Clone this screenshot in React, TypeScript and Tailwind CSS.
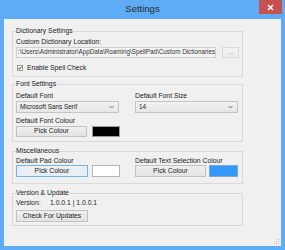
import React from 'react';

const font = "font-['Liberation_Sans',Arial,sans-serif]";

const GroupBox = ({ title, className, children }: { title: string; className: string; children: React.ReactNode }) => (
  <fieldset className={`ml-[8px] w-[231px] border border-[#d9d9d9] px-[3px] ${className}`}>
    <legend className="px-0 text-[6.8px] leading-[10px] text-[#222]">{title}</legend>
    {children}
  </fieldset>
);

const Label = ({ children, className = '' }: { children: React.ReactNode; className?: string }) => (
  <div className={`h-[10px] text-[6.8px] leading-[10px] text-[#222] whitespace-nowrap ${className}`}>{children}</div>
);

const Btn = ({ children, className = '' }: { children: React.ReactNode; className?: string }) => (
  <div
    className={`flex items-center justify-center border bg-gradient-to-b from-[#efefef] to-[#e3e3e3] text-[6.8px] leading-none text-[#222] ${className}`}
  >
    {children}
  </div>
);

const Combo = ({ value }: { value: string }) => (
  <div className="flex h-[12px] items-center justify-between border border-[#c4c4c4] bg-gradient-to-b from-[#f2f2f2] to-[#e6e6e6] pl-[3px] pr-[4px]">
    <span className="text-[6.4px] leading-none text-[#222]">{value}</span>
    <svg width="5" height="4" viewBox="0 0 5 4">
      <path d="M0.5 1 L2.5 3 L4.5 1" fill="none" stroke="#555" strokeWidth="0.8" />
    </svg>
  </div>
);

export default function App() {
  return (
    <div className={`relative flex h-[250px] w-[285px] flex-col bg-[#5eacf6] px-[4px] pb-[4px] ${font}`}>
      {/* title bar */}
      <div className="flex h-[19px] items-center justify-center pb-[1px] text-[9.5px] text-[#2a2a2a]">Settings</div>
      <div className="absolute left-[259px] top-0 flex h-[14px] w-[23px] items-center justify-center bg-[#c75050]">
        <svg width="7" height="7" viewBox="0 0 7 7">
          <path d="M1 1 L6 6 M6 1 L1 6" stroke="#fff" strokeWidth="1.5" />
        </svg>
      </div>

      <div className="relative flex-1 bg-[#f0f0f0]">
        <GroupBox title="Dictionary Settings" className="mt-[7px] pb-[3px]">
          <Label className="mt-[1px]">Custom Dictionary Location:</Label>
          <div className="flex h-[11px] gap-[6px]">
            <div className="flex w-[200px] items-center overflow-hidden border border-[#cfcfcf] bg-[#f3f3f3] pl-[1px] text-[6.3px] leading-none whitespace-nowrap text-[#333]">
              :\Users\Administrator\AppData\Roaming\SpellPad\Custom Dictionaries
            </div>
            <Btn className="w-[17px] border-[#dadada] text-[#999] from-[#f2f2f2] to-[#ededed]">...</Btn>
          </div>
          <div className="mt-[5px] flex h-[10px] items-center gap-[4px] pl-[1px]">
            <svg width="6" height="6" viewBox="0 0 6 6">
              <rect x="0.5" y="0.5" width="5" height="5" fill="#fff" stroke="#777" strokeWidth="0.7" />
              <path d="M1.4 3 L2.5 4.2 L4.6 1.6" fill="none" stroke="#222" strokeWidth="0.9" />
            </svg>
            <span className="text-[6.8px] leading-none text-[#222]">Enable Spell Check</span>
          </div>
        </GroupBox>

        <GroupBox title="Font Settings" className="mt-[2px] pb-[4px]">
          <div className="grid grid-cols-[103px_103px] gap-x-[16px]">
            <div>
              <Label className="mt-[2px]">Default Font</Label>
              <Combo value="Microsoft Sans Serif" />
            </div>
            <div>
              <Label className="mt-[2px]">Default Font Size</Label>
              <Combo value="14" />
            </div>
          </div>
          <Label className="mt-[3px]">Default Font Colour</Label>
          <div className="flex h-[11px] gap-[5px]">
            <Btn className="w-[71px] border-[#c2c2c2]">Pick Colour</Btn>
            <div className="w-[28px] border border-[#9a9a9a] bg-black" />
          </div>
        </GroupBox>

        <GroupBox title="Miscellaneous" className="mt-[4px] pb-[6px]">
          <div className="grid grid-cols-[104px_103px] gap-x-[15px]">
            <div>
              <Label>Default Pad Colour</Label>
              <div className="-mt-[1px] flex h-[12px] gap-[4px]">
                <Btn className="w-[72px] border-[#72b4ea] from-[#eef5fb] to-[#e3eef8]">Pick Colour</Btn>
                <div className="w-[28px] border border-[#b5b5b5] bg-white" />
              </div>
            </div>
            <div>
              <Label>Default Text Selection Colour</Label>
              <div className="-mt-[1px] flex h-[12px] gap-[3px]">
                <Btn className="w-[71px] border-[#c2c2c2]">Pick Colour</Btn>
                <div className="w-[29px] border border-[#7fa7cf] bg-[#3399ff]" />
              </div>
            </div>
          </div>
        </GroupBox>

        <GroupBox title="Version &amp; Update" className="mt-[4px] pb-[3px]">
          <div className="flex h-[10px] items-center text-[6.8px] leading-none text-[#222]">
            <span className="w-[34px]">Version:</span>
            <span>1.0.0.1 | 1.0.0.1</span>
          </div>
          <Btn className="mt-[2px] h-[12px] w-[72px] border-[#c2c2c2]">Check For Updates</Btn>
        </GroupBox>

        {/* resize grip */}
        <svg className="absolute bottom-[1px] right-[1px]" width="6" height="6" viewBox="0 0 6 6">
          <rect x="4" y="0" width="1" height="1" fill="#b8b8b8" />
          <rect x="2" y="2" width="1" height="1" fill="#b8b8b8" />
          <rect x="4" y="2" width="1" height="1" fill="#b8b8b8" />
          <rect x="0" y="4" width="1" height="1" fill="#b8b8b8" />
          <rect x="2" y="4" width="1" height="1" fill="#b8b8b8" />
          <rect x="4" y="4" width="1" height="1" fill="#b8b8b8" />
        </svg>
      </div>
    </div>
  );
}
